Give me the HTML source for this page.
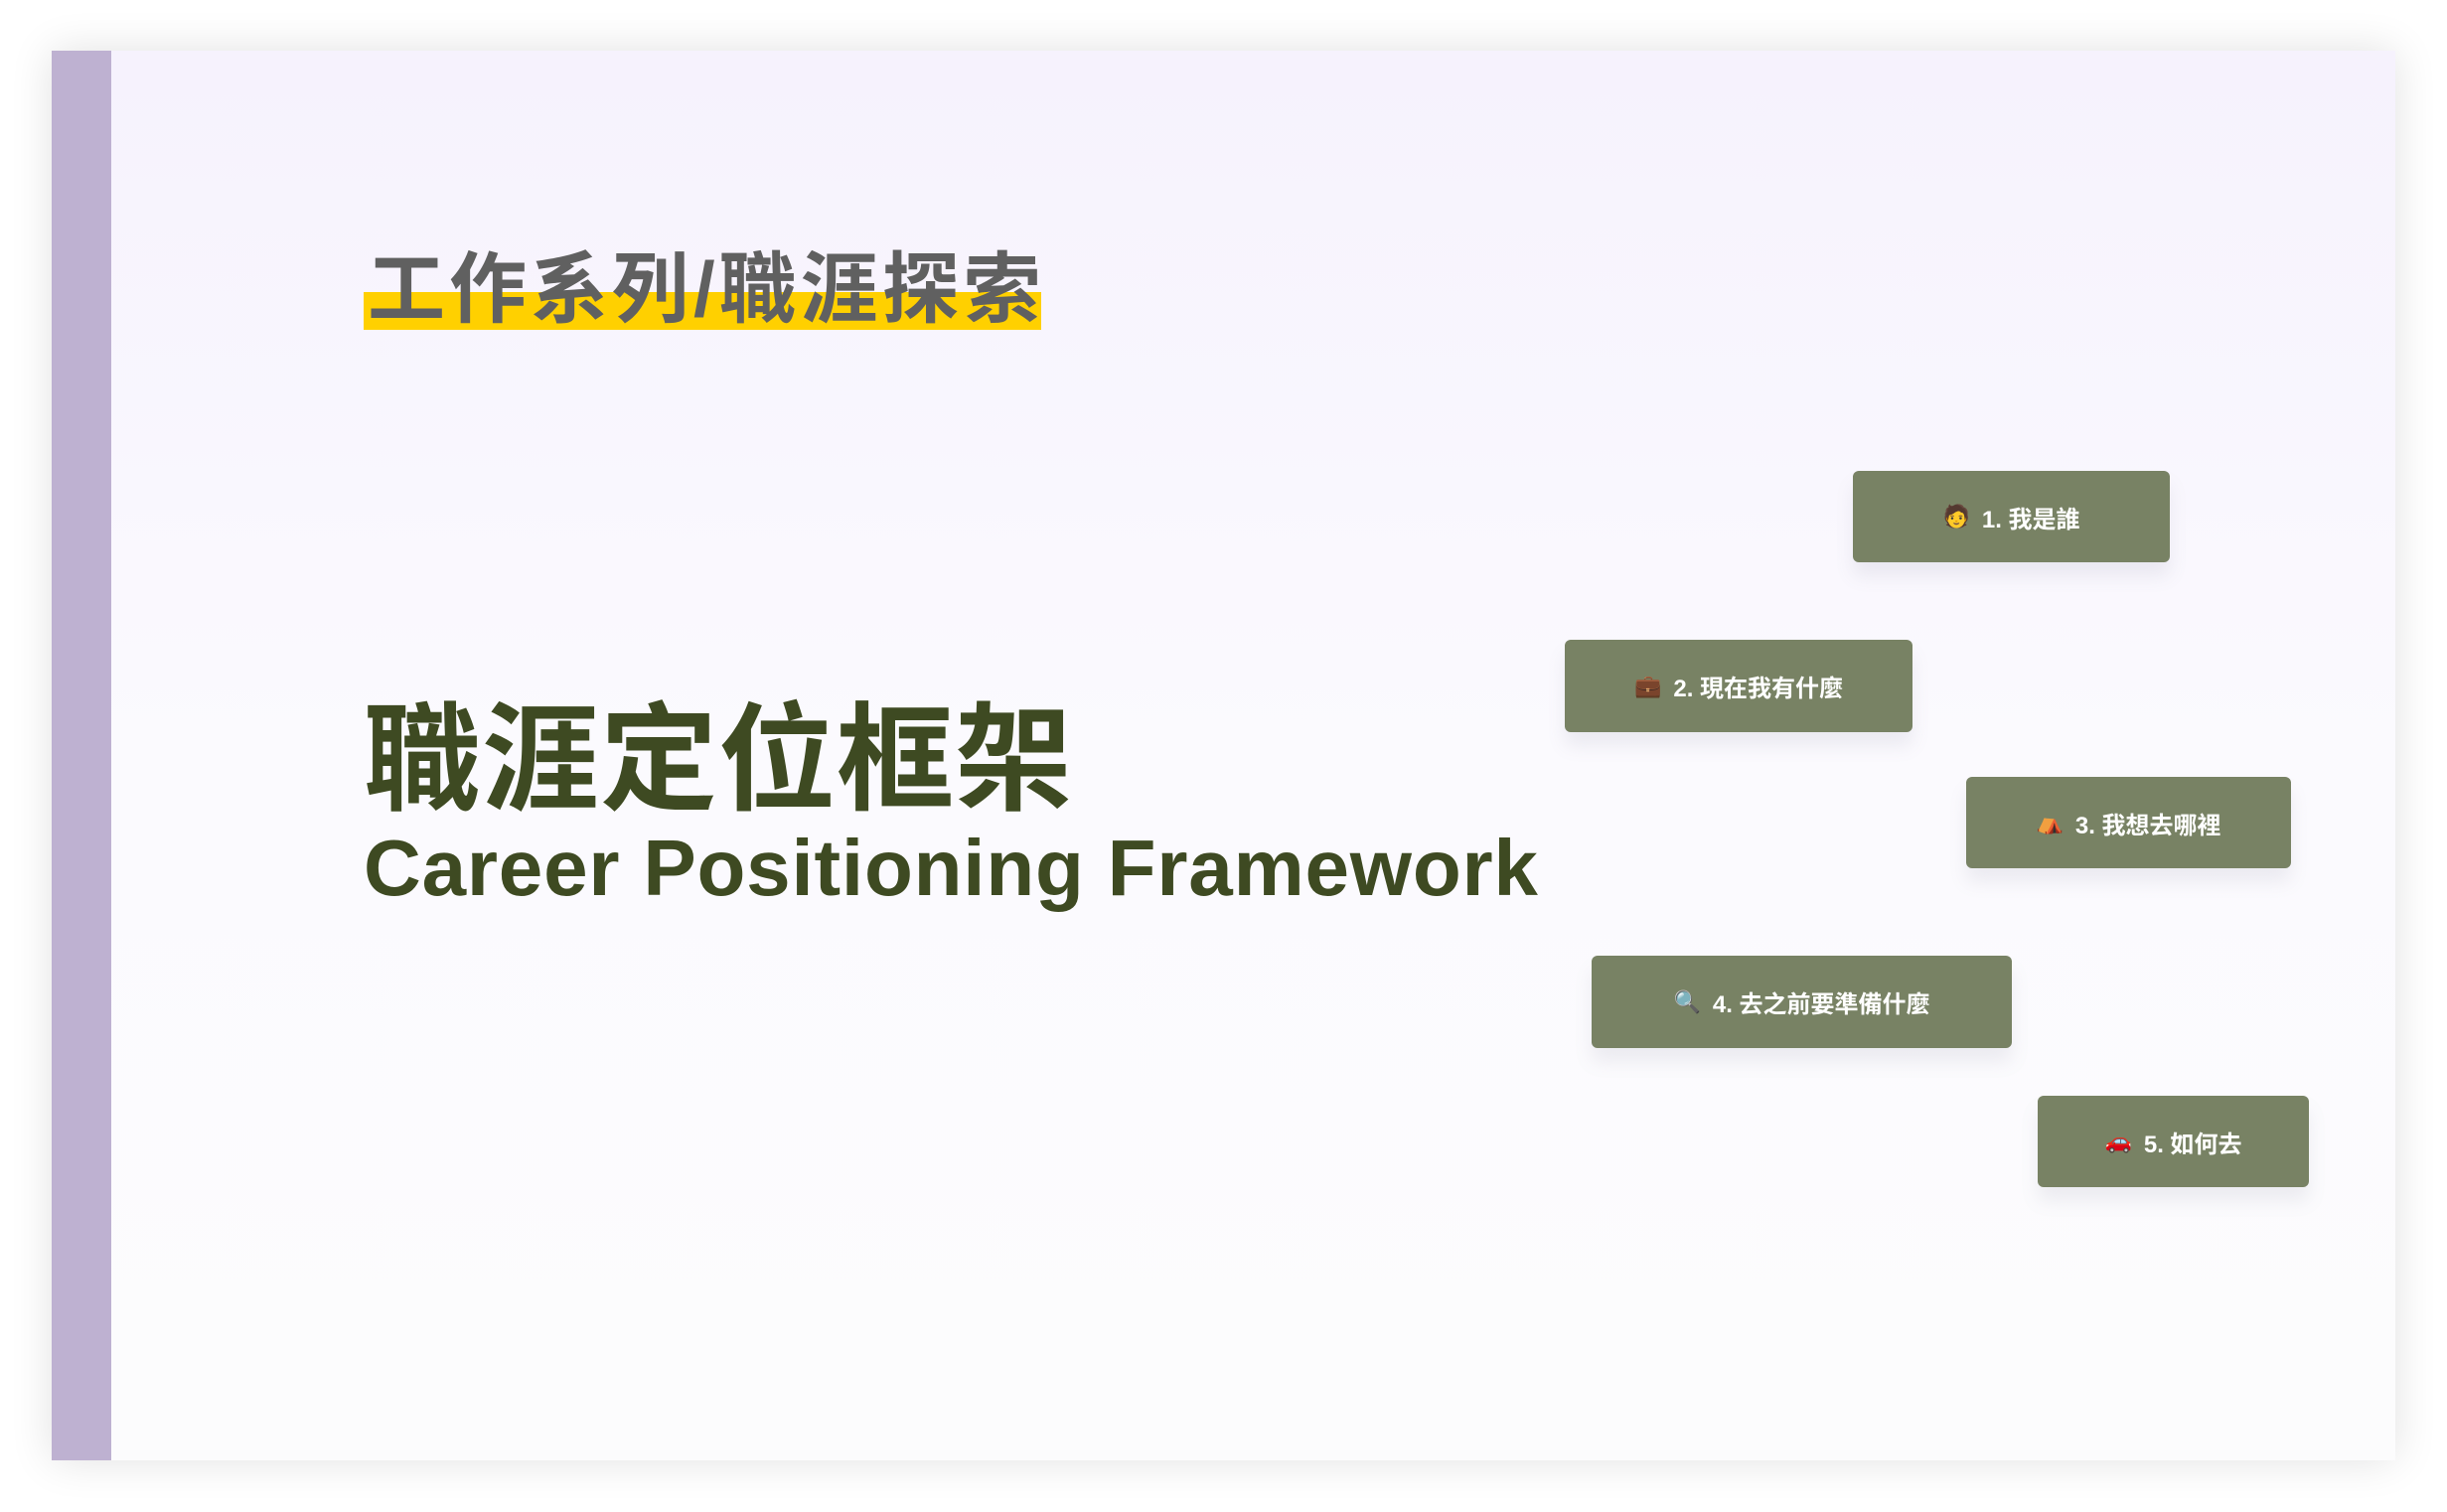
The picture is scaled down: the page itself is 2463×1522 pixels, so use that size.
<!DOCTYPE html>
<html><head><meta charset="utf-8"><style>
*{margin:0;padding:0;box-sizing:border-box}
body{width:2463px;height:1522px;background:#fff;position:relative;overflow:hidden;font-family:"Liberation Sans","Noto Sans CJK TC",sans-serif}
.slide{position:absolute;left:52px;top:51px;width:2359px;height:1419px;background:linear-gradient(#f6f2fd,#fbfafe 50%,#fcfcfd);box-shadow:0 0 40px rgba(0,0,0,0.12)}
.bar{position:absolute;left:52px;top:51px;width:60px;height:1419px;background:#beb1d1}
.sub{position:absolute;left:370px;top:236px;font-size:78px;font-weight:bold;color:#606060;line-height:110px;white-space:nowrap;letter-spacing:4px}
.hl{position:absolute;left:366px;top:294px;width:682px;height:38px;background:#ffd000}
.t1{position:absolute;left:366px;top:686px;font-size:118px;font-weight:bold;color:#3e4a22;line-height:160px;white-space:nowrap;letter-spacing:1px}
.t2{position:absolute;left:366px;top:826px;font-size:80px;font-weight:bold;color:#3e4a22;line-height:96px;white-space:nowrap;letter-spacing:0.8px}
.b{position:absolute;background:#788264;border-radius:6px;color:#fff;font-weight:bold;font-size:24px;display:flex;align-items:center;justify-content:center;box-shadow:0 14px 18px rgba(120,120,150,0.12)}
.b span{margin-right:12px;font-size:22px}
</style></head><body>
<div class="slide"></div>
<div class="bar"></div>
<div class="hl"></div>
<div class="sub">工作系列/職涯探索</div>
<div class="t1">職涯定位框架</div>
<div class="t2">Career Positioning Framework</div>
<div class="b" style="left:1865px;top:474px;width:319px;height:92px"><span>🧑</span>1. 我是誰</div>
<div class="b" style="left:1575px;top:644px;width:350px;height:93px"><span>💼</span>2. 現在我有什麼</div>
<div class="b" style="left:1979px;top:782px;width:327px;height:92px"><span>⛺</span>3. 我想去哪裡</div>
<div class="b" style="left:1602px;top:962px;width:423px;height:93px"><span>🔍</span>4. 去之前要準備什麼</div>
<div class="b" style="left:2051px;top:1103px;width:273px;height:92px"><span>🚗</span>5. 如何去</div>
</body></html>
